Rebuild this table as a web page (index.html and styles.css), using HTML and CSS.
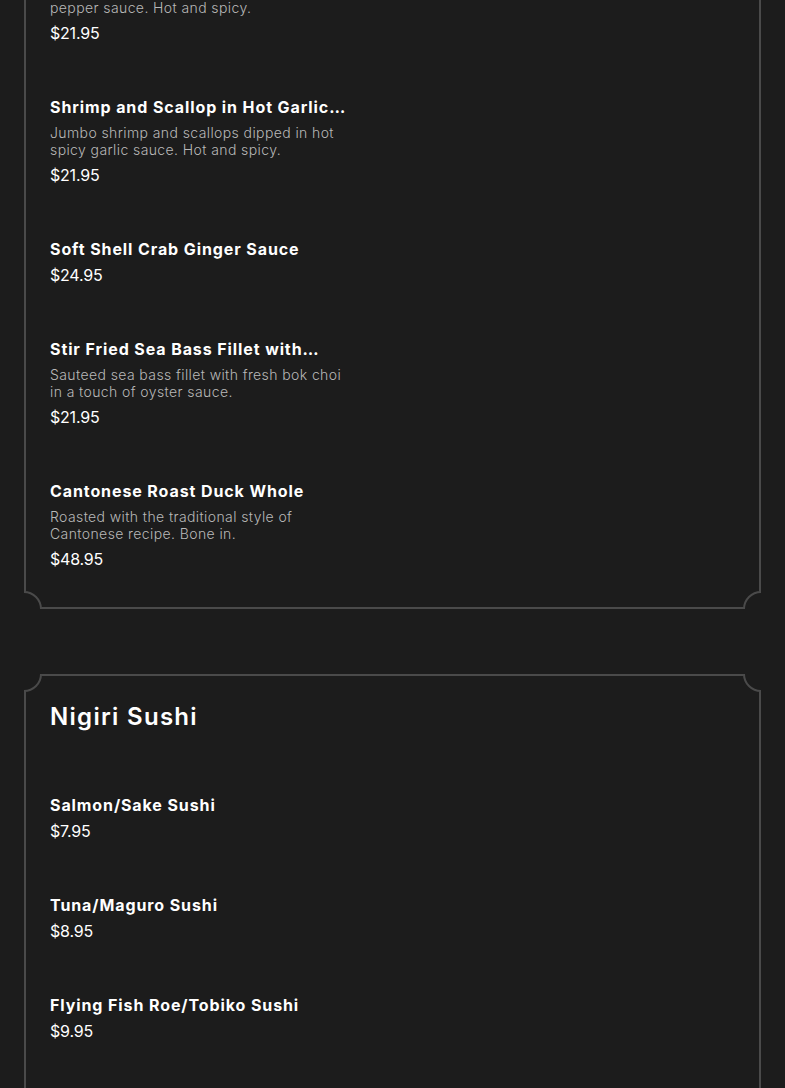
FILE: index.html
```html
<!DOCTYPE html>
<html lang="en">
<head>
<meta charset="utf-8">
<title>Menu</title>
<link rel="stylesheet" href="styles.css">
</head>
<body>
<main class="menu">
  <section class="frame">
    <span class="corner tl"></span><span class="corner tr"></span><span class="corner bl"></span><span class="corner br"></span>
    <div class="card">
      <div class="items">
        <article class="item">
          <h3 class="item-title">Shrimp and Scallop with Black…</h3>
          <p class="item-desc">Jumbo shrimp and scallops in black pepper sauce. Hot and spicy.</p>
          <p class="item-price">$21.95</p>
        </article>
        <article class="item">
          <h3 class="item-title" title="Shrimp and Scallop in Hot Garlic Sauce">Shrimp and Scallop in Hot Garlic…</h3>
          <p class="item-desc">Jumbo shrimp and scallops dipped in hot spicy garlic sauce. Hot and spicy.</p>
          <p class="item-price">$21.95</p>
        </article>
        <article class="item">
          <h3 class="item-title">Soft Shell Crab Ginger Sauce</h3>
          <p class="item-price">$24.95</p>
        </article>
        <article class="item">
          <h3 class="item-title" title="Stir Fried Sea Bass Fillet with Bok Choi">Stir Fried Sea Bass Fillet with…</h3>
          <p class="item-desc">Sauteed sea bass fillet with fresh bok choi in a touch of oyster sauce.</p>
          <p class="item-price">$21.95</p>
        </article>
        <article class="item">
          <h3 class="item-title">Cantonese Roast Duck Whole</h3>
          <p class="item-desc">Roasted with the traditional style of Cantonese recipe. Bone in.</p>
          <p class="item-price">$48.95</p>
        </article>
      </div>
    </div>
  </section>

  <section class="frame">
    <span class="corner tl"></span><span class="corner tr"></span><span class="corner bl"></span><span class="corner br"></span>
    <div class="card">
      <h2 class="card-title">Nigiri Sushi</h2>
      <div class="items">
        <article class="item">
          <h3 class="item-title">Salmon/Sake Sushi</h3>
          <p class="item-price">$7.95</p>
        </article>
        <article class="item">
          <h3 class="item-title">Tuna/Maguro Sushi</h3>
          <p class="item-price">$8.95</p>
        </article>
        <article class="item">
          <h3 class="item-title">Flying Fish Roe/Tobiko Sushi</h3>
          <p class="item-price">$9.95</p>
        </article>
        <article class="item">
          <h3 class="item-title">Yellowtail/Hamachi Sushi</h3>
          <p class="item-price">$8.95</p>
        </article>
        <article class="item">
          <h3 class="item-title">Eel/Unagi Sushi</h3>
          <p class="item-price">$8.95</p>
        </article>
      </div>
    </div>
  </section>
</main>
</body>
</html>
```
FILE: styles.css
```css
* {
  box-sizing: border-box;
}

html, body {
  margin: 0;
  padding: 0;
  background: #1c1c1c;
}

body {
  font-family: "Inter", "Liberation Sans", sans-serif;
  color: #ffffff;
}

.menu {
  margin-top: -71px;
  display: flex;
  flex-direction: column;
  gap: 65px;
  padding: 0 24px 40px;
}

.frame {
  position: relative;
  overflow: hidden;
}

.card {
  border: 2px solid #4a4a4a;
  padding: 24px 24px 38px;
}

.corner {
  position: absolute;
  width: 36px;
  height: 36px;
  border-radius: 50%;
  border: 2px solid #4a4a4a;
  background: #1c1c1c;
  z-index: 1;
}

.corner.tl { top: -18px; left: -18px; }
.corner.tr { top: -18px; right: -18px; }
.corner.bl { bottom: -18px; left: -18px; }
.corner.br { bottom: -18px; right: -18px; }

.card-title {
  margin: 0 0 61px;
  font-size: 24px;
  line-height: 34px;
  font-weight: 600;
  letter-spacing: 1.3px;
}

.items {
  display: flex;
  flex-direction: column;
  gap: 54px;
}

.item {
  width: 295px;
  display: flex;
  flex-direction: column;
}

.item-title {
  width: 302px;
  margin: 0 0 6px;
  font-size: 16px;
  line-height: 20px;
  font-weight: 700;
  letter-spacing: 0.9px;
  white-space: nowrap;
  overflow: hidden;
  text-overflow: ellipsis;
}

.item-desc {
  margin: 1px 0 7px;
  font-size: 14px;
  line-height: 17px;
  font-weight: 300;
  letter-spacing: 0.4px;
  color: #b8b8b8;
}

.item-price {
  margin: 0;
  font-size: 16px;
  line-height: 20px;
  font-weight: 400;
  letter-spacing: -0.2px;
}
```
